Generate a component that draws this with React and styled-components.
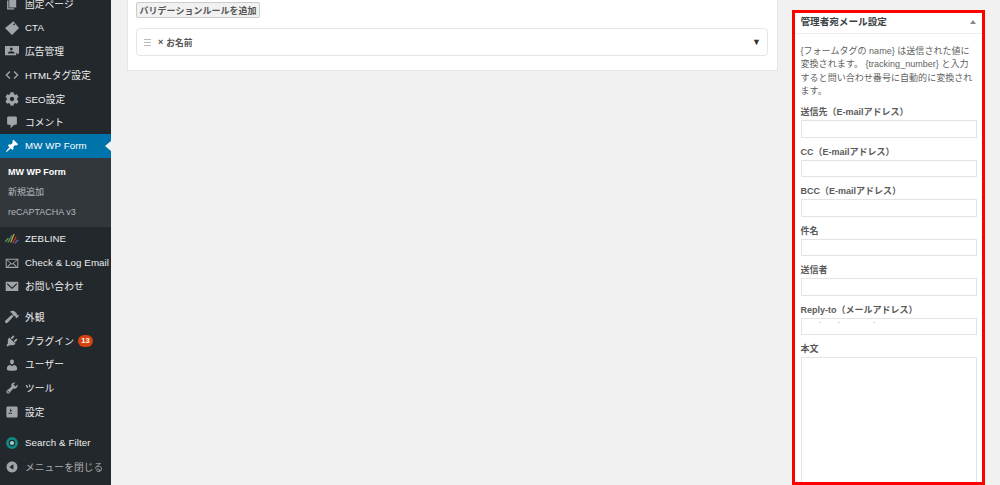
import React from "react";
import styled, { createGlobalStyle } from "styled-components";
import { FaCog, FaHammer } from "react-icons/fa";

const Global = createGlobalStyle`
  html, body { margin: 0; padding: 0; background: #f1f1f1; }
  body { font-family: "Liberation Sans", "Noto Sans CJK JP", sans-serif; }
`;

const Page = styled.div`
  display: flex;
  width: 1000px;
  height: 485px;
  overflow: hidden;
`;

const Sidebar = styled.nav`
  flex: none;
  width: 111px;
  background: #23282d;
`;

const Menu = styled.ul`
  list-style: none;
  margin: -8px 0 0;
  padding: 0;
`;

const Item = styled.li`
  position: relative;
  display: flex;
  align-items: center;
  height: 23.7px;
  margin-bottom: ${(props) => (props.$gap ? "7.4px" : "0")};
  padding-left: 25px;
  font-size: 9.7px;
  letter-spacing: 0.1px;
  white-space: nowrap;
  color: ${(props) => (props.$active ? "#fff" : props.$dim ? "#aaa" : "#eee")};
  background: ${(props) => (props.$active ? "#0073aa" : "transparent")};

  &::after {
    content: "";
    display: ${(props) => (props.$active ? "block" : "none")};
    position: absolute;
    right: 0;
    top: 7px;
    border: 5px solid transparent;
    border-left: 0;
    border-right: 6px solid #f1f1f1;
  }
`;

const IconSlot = styled.span`
  position: absolute;
  left: 5px;
  top: 5px;
  width: 14px;
  height: 14px;
  display: flex;
  align-items: center;
  justify-content: center;
  color: ${(props) => (props.$active ? "#fff" : "#a0a5aa")};

  svg {
    display: block;
    width: 14px;
    height: 14px;
  }
`;

const Badge = styled.span`
  display: inline-block;
  margin-left: 4px;
  width: 15px;
  height: 12px;
  line-height: 12px;
  border-radius: 6px;
  background: #d5420f;
  color: #fff;
  font-size: 7.5px;
  font-weight: 700;
  text-align: center;
`;

const Submenu = styled.ul`
  list-style: none;
  margin: 0;
  padding: 4px 0 5px;
  height: 69px;
  box-sizing: border-box;
  background: #32373c;
`;

const SubItem = styled.li`
  height: 20px;
  line-height: 20px;
  padding-left: 8px;
  font-size: 9px;
  font-weight: ${(props) => (props.$current ? 700 : 400)};
  color: ${(props) => (props.$current ? "#fff" : "#b4b9be")};
`;

const Content = styled.main`
  flex: 1;
  display: flex;
  align-items: flex-start;
  padding-left: 16px;
`;

const Card = styled.section`
  flex: none;
  width: 651px;
  height: 71px;
  box-sizing: border-box;
  padding: 2px 9px 0 8px;
  background: #fff;
  border: 1px solid #e5e5e5;
  border-top: 0;
`;

const AddButton = styled.button`
  display: block;
  box-sizing: border-box;
  width: 124px;
  height: 16px;
  margin: 0;
  padding: 0;
  border: 1px solid #ccc;
  border-radius: 2px;
  background: #f1f1f1;
  color: #555;
  font-family: inherit;
  font-size: 9px;
  font-weight: 700;
  text-align: center;
`;

const RuleRow = styled.div`
  display: flex;
  align-items: center;
  box-sizing: border-box;
  height: 28px;
  margin-top: 10px;
  padding: 0 6px 0 7px;
  border: 1px solid #e5e5e5;
  border-radius: 4px;
  font-size: 8.7px;
  font-weight: 700;
  color: #555;
`;

const Grip = styled.span`
  width: 7px;
  height: 7px;
  border-top: 1px solid #bbb;
  border-bottom: 1px solid #bbb;
  position: relative;
  margin-right: 7px;
  box-sizing: border-box;

  &::after {
    content: "";
    position: absolute;
    left: 0;
    right: 0;
    top: 2px;
    height: 1px;
    background: #bbb;
  }
`;

const Remove = styled.span`
  font-size: 9px;
  font-weight: 700;
  margin-right: 3px;
`;

const Toggle = styled.span`
  margin-left: auto;
  font-size: 9px;
  color: #333;
`;

const Panel = styled.aside`
  flex: none;
  box-sizing: border-box;
  width: 193px;
  height: 475px;
  margin: 9.5px 0 0 14px;
  border: 3.5px solid #f00;
  background: #fff;
  overflow: hidden;
`;

const PanelHead = styled.header`
  display: flex;
  align-items: center;
  justify-content: space-between;
  height: 21.5px;
  box-sizing: border-box;
  padding: 0 6px 4px 5.5px;
  border-bottom: 1px solid #eee;
  font-size: 9.6px;
  font-weight: 700;
  color: #3a3f44;
`;

const Caret = styled.span`
  width: 0;
  height: 0;
  margin-top: 2px;
  border: 3px solid transparent;
  border-top: 0;
  border-bottom: 4px solid #888;
`;

const PanelBody = styled.div`
  padding: 11px 5.5px 0 5.5px;
`;

const Desc = styled.p`
  margin: 0;
  font-size: 9.05px;
  line-height: 13.3px;
  white-space: nowrap;
  color: #5f5f5f;
`;

const Field = styled.div`
  margin-top: 8px;
`;

const Label = styled.label`
  display: block;
  height: 13px;
  line-height: 13px;
  margin-bottom: 1px;
  font-size: 9px;
  font-weight: 700;
  color: #5a5a5a;
  white-space: nowrap;
`;

const Input = styled.div`
  position: relative;
  box-sizing: border-box;
  height: 17.5px;
  border: 1px solid #e4e4e4;
  background: #fff;
`;

const TextArea = styled(Input)`
  height: 130px;
`;

// faint leftovers of a hidden address in the Reply-to box
const Speck = styled.i`
  position: absolute;
  top: 3px;
  left: ${(props) => props.$left}px;
  width: ${(props) => props.$width}px;
  height: 1px;
  background: #d8d8d8;
`;

const paths = {
  page: "M6 15V2h10v13H6zm-1 1h8v2H3V5h2v11z",
  comment: "M5 2h10c1.1 0 2 .9 2 2v8c0 1.1-.9 2-2 2h-2l-5 5v-5H5c-1.1 0-2-.9-2-2V4c0-1.1.9-2 2-2z",
  pin: "M10.44 3.02l1.82-1.82 6.36 6.35-1.83 1.82c-1.05-.68-2.48-.57-3.41.36l-.75.75c-.92.93-1.04 2.35-.35 3.41l-1.83 1.82-2.41-2.41-2.8 2.79c-.42.42-3.38 2.71-3.8 2.29s1.86-3.39 2.28-3.81l2.79-2.79L4.1 9.36l1.83-1.82c1.05.69 2.48.57 3.4-.36l.75-.75c.93-.92 1.05-2.35.36-3.41z",
  plugin: "M13.11 4.36L9.87 7.6 8 5.73l3.24-3.24c.35-.34 1.05-.2 1.56.32.52.51.66 1.21.31 1.55zm-8 1.77l.91-1.12 9.01 9.01-1.19.84c-.71.71-2.63 1.16-3.82 1.16H6.14L4.9 17.26c-.59.59-1.54.59-2.12 0-.59-.58-.59-1.53 0-2.12l1.24-1.24v-3.88c0-1.13.4-3.19 1.09-3.89zm7.26 3.97l3.24-3.24c.34-.35 1.04-.21 1.55.31.52.51.66 1.21.31 1.55l-3.24 3.25z",
  user: "M10 9.25c-2.27 0-2.73-3.44-2.73-3.44C7 4.02 7.82 2 9.97 2c2.16 0 2.98 2.02 2.71 3.81 0 0-.41 3.44-2.68 3.44zm0 2.57L12.72 10c2.39 0 4.52 2.33 4.52 4.53v2.49s-3.65 1.13-7.24 1.13c-3.65 0-7.24-1.13-7.24-1.13v-2.49c0-2.25 1.94-4.48 4.47-4.48z",
  tools: "M16.68 9.77c-1.34 1.34-3.3 1.67-4.95.99l-5.41 6.52c-.99.99-2.59.99-3.58 0s-.99-2.59 0-3.57l6.52-5.42c-.68-1.65-.35-3.61.99-4.95 1.28-1.28 3.12-1.62 4.72-1.06l-2.89 2.89 2.82 2.82 2.86-2.87c.53 1.58.18 3.39-1.08 4.65zM3.81 16.21c.4.39 1.04.39 1.43 0 .4-.4.4-1.04 0-1.43-.39-.4-1.03-.4-1.43 0-.39.39-.39 1.03 0 1.43z",
  settings: "M18 16V4c0-1.1-.9-2-2-2H4c-1.1 0-2 .9-2 2v12c0 1.1.9 2 2 2h12c1.1 0 2-.9 2-2zM8 11h1c.55 0 1 .45 1 1s-.45 1-1 1H8v1.5c0 .28-.22.5-.5.5s-.5-.22-.5-.5V13H6c-.55 0-1-.45-1-1s.45-1 1-1h1V5.5c0-.28.22-.5.5-.5s.5.22.5.5V7h1c.55 0 1 .45 1 1s-.45 1-1 1h-1v5.5c0 .28-.22.5-.5.5s-.5-.22-.5-.5V9z",
  collapse: "M10 2.16c4.33 0 7.84 3.51 7.84 7.84s-3.51 7.84-7.84 7.84S2.16 14.33 2.16 10 5.71 2.16 10 2.16zm2 11.72V6.12L6.18 9.97z",
  tag: "M12 .5l8 9.5-10 10L0 10 10 2l2-1.500zM13 3.500a1.300 1.300 0 1 0 0 2.600 1.300 1.300 0 0 0 0-2.600z",
  ad: "M0 3h20v11h-3v-1h-1v3H0V3zm9 2a2 2 0 0 0-2 2.2c.1 1.2.9 2 2 2s1.9-.8 2-2A2 2 0 0 0 9 5zm-5 8.5h10c0-2-2.5-3.2-5-3.2s-5 1.2-5 3.2z",
  mailOpen: "M1 4h18v13H1V4zm1.5 1.5v10h15v-10h-15z M3 5l7 6 7-6v1.6l-4.6 3.9L17 15v.6h-1l-4.7-4.2L10 12.6l-1.3-1.2L4 15.6H3V15l4.6-4.5L3 6.6V5z",
  mail: "M1 4h18v13H1V4zm2.2 1.8L10 12l6.8-6.2v2.4L10 14.4 3.2 8.2V5.8z",
};

const Dash = ({ name }) => (
  <svg viewBox="0 0 20 20" fill="currentColor" fillRule="evenodd">
    <path d={paths[name]} />
  </svg>
);

const CodeIcon = () => (
  <svg viewBox="0 0 20 20" fill="none" stroke="currentColor" strokeWidth="2">
    <path d="M7 5l-5 5 5 5M13 5l5 5-5 5" />
  </svg>
);

const ZebIcon = () => (
  <svg viewBox="0 0 20 20" fill="none" strokeWidth="1.8">
    <path d="M0 14l5-5" stroke="#6a9e3c" />
    <path d="M4 15l6-10" stroke="#3f9a8c" />
    <path d="M8 15l5-12" stroke="#c9a227" />
    <path d="M11 16l5-9" stroke="#c0392b" />
    <path d="M14 16l5-5" stroke="#4c6fa8" />
  </svg>
);

const FilterIcon = () => (
  <svg viewBox="0 0 20 20" fill="none">
    <circle cx="10" cy="10" r="6.5" stroke="#0e8a84" strokeWidth="4" />
    <circle cx="10" cy="10" r="3" fill="#a9cfc9" />
  </svg>
);

const top = [
  [<Dash name="page" />, "固定ページ"],
  [<Dash name="tag" />, "CTA"],
  [<Dash name="ad" />, "広告管理"],
  [<CodeIcon />, "HTMLタグ設定"],
  [<FaCog />, "SEO設定"],
  [<Dash name="comment" />, "コメント"],
];

const middle = [
  [<ZebIcon />, "ZEBLINE"],
  [<Dash name="mailOpen" />, "Check & Log Email"],
  [<Dash name="mail" />, "お問い合わせ", true],
  [<FaHammer />, "外観"],
];

const fields = [
  "送信先（E-mailアドレス）",
  "CC（E-mailアドレス）",
  "BCC（E-mailアドレス）",
  "件名",
  "送信者",
];

const MenuRow = ({ icon, gap, active, dim, children }) => (
  <Item $gap={gap} $active={active} $dim={dim}>
    <IconSlot $active={active}>{icon}</IconSlot>
    {children}
  </Item>
);

const App = () => {
  return (
    <Page>
      <Global />
      <Sidebar>
        <Menu>
          {top.map(([icon, label]) => (
            <MenuRow key={label} icon={icon}>{label}</MenuRow>
          ))}
          <MenuRow icon={<Dash name="pin" />} active>MW WP Form</MenuRow>
          <Submenu>
            <SubItem $current>MW WP Form</SubItem>
            <SubItem>新規追加</SubItem>
            <SubItem>reCAPTACHA v3</SubItem>
          </Submenu>
          {middle.map(([icon, label, gap]) => (
            <MenuRow key={label} icon={icon} gap={gap}>{label}</MenuRow>
          ))}
          <MenuRow icon={<Dash name="plugin" />}>プラグイン<Badge>13</Badge></MenuRow>
          <MenuRow icon={<Dash name="user" />}>ユーザー</MenuRow>
          <MenuRow icon={<Dash name="tools" />}>ツール</MenuRow>
          <MenuRow icon={<Dash name="settings" />} gap>設定</MenuRow>
          <MenuRow icon={<FilterIcon />}>Search &amp; Filter</MenuRow>
          <MenuRow icon={<Dash name="collapse" />} dim>メニューを閉じる</MenuRow>
        </Menu>
      </Sidebar>
      <Content>
        <Card>
          <AddButton>バリデーションルールを追加</AddButton>
          <RuleRow>
            <Grip />
            <Remove>×</Remove>
            お名前
            <Toggle>▼</Toggle>
          </RuleRow>
        </Card>
        <Panel>
          <PanelHead>
            管理者宛メール設定
            <Caret />
          </PanelHead>
          <PanelBody>
            <Desc>
              {"{フォームタグの name} は送信された値に"}<br />
              {"変換されます。 {tracking_number} と入力"}<br />
              すると問い合わせ番号に自動的に変換され<br />
              ます。
            </Desc>
            {fields.map((label) => (
              <Field key={label}>
                <Label>{label}</Label>
                <Input />
              </Field>
            ))}
            <Field>
              <Label>Reply-to（メールアドレス）</Label>
              <Input>
                <Speck $left={17} $width={2} />
                <Speck $left={36} $width={2} />
                <Speck $left={71} $width={2} />
              </Input>
            </Field>
            <Field>
              <Label>本文</Label>
              <TextArea />
            </Field>
          </PanelBody>
        </Panel>
      </Content>
    </Page>
  );
};

export default App;
